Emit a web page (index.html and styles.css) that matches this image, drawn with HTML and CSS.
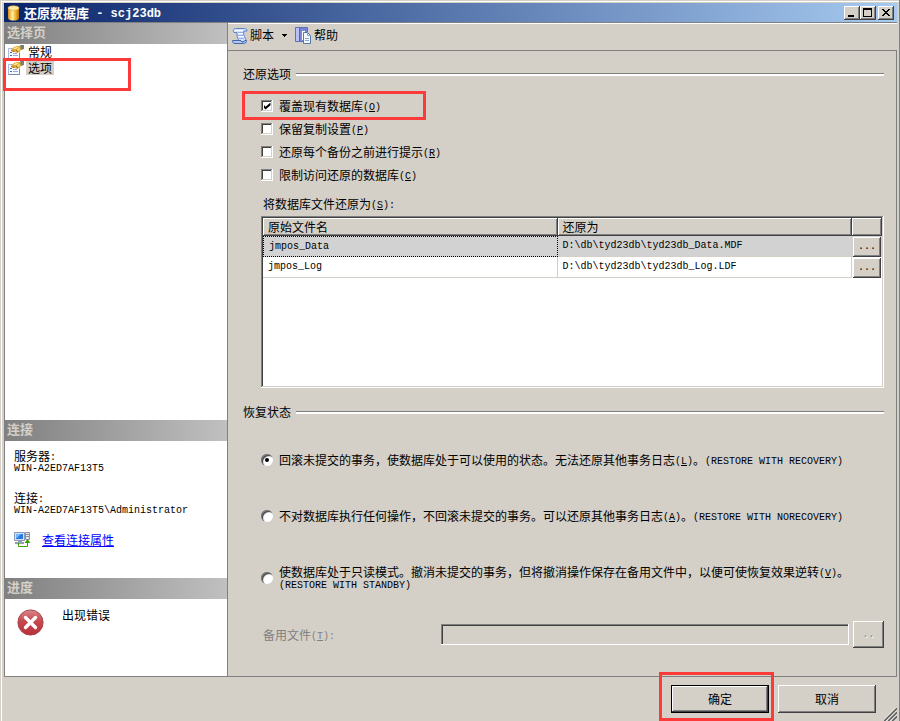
FILE: index.html
```html
<!DOCTYPE html>
<html lang="zh-CN">
<head>
    <meta charset="UTF-8">
    <meta name="viewport" content="width=device-width, initial-scale=1.0">
    <title>还原数据库 - scj23db</title>
    <link rel="stylesheet" href="styles.css">
</head>
<body>
    <div class="dialog">
        <header class="titlebar">
            <svg class="title-icon" width="16" height="16" viewBox="0 0 16 16">
                <defs>
                    <linearGradient id="gold">
                        <stop offset="0" stop-color="#d98c10"/>
                        <stop offset="0.4" stop-color="#fff0a0"/>
                        <stop offset="0.65" stop-color="#f5bc38"/>
                        <stop offset="1" stop-color="#b87008"/>
                    </linearGradient>
                </defs>
                <path d="M2 3v10c0 3.400 11 3.400 11 0V3z" fill="url(#gold)"/>
                <ellipse cx="7.500" cy="3" rx="5.500" ry="2.300" fill="#ffeaa0" stroke="#dfa030" stroke-width="0.600"/>
            </svg>
            <h1 class="title">还原数据库<span class="title-latin"> - scj23db</span></h1>
            <div class="window-buttons">
                <button type="button" class="raised window-button" aria-label="最小化">
                    <svg width="16" height="14" shape-rendering="crispEdges"><path d="M4 9h6v2H4z"/></svg>
                </button>
                <button type="button" class="raised window-button" aria-label="最大化">
                    <svg width="16" height="14" shape-rendering="crispEdges"><path d="M3 2h9v9H3zM4 4v6h7V4z" fill-rule="evenodd"/></svg>
                </button>
                <button type="button" class="raised window-button close" aria-label="关闭">
                    <svg width="16" height="14" shape-rendering="crispEdges"><path d="M4 3h2v1h1v1h2V4h1V3h2v1h-1v1h-1v1H9v1h1v1h1v1h1v1h-2V9H9V8H7v1H6v1H4V9h1V8h1V7h1V6H6V5H5V4H4z"/></svg>
                </button>
            </div>
        </header>

        <div class="workspace">
            <aside class="sidebar">
                <h2 class="side-heading">选择页</h2>
                <nav class="pages">
                    <svg class="defs" width="0" height="0">
                        <symbol id="page-icon" viewBox="0 0 16 15">
                            <path d="M0.500 3.500h11v10h-11z" fill="#f8faff" stroke="#a8b8dc"/>
                            <path d="M0.500 13.500h11V8" fill="none" stroke="#7888b8"/>
                            <path d="M2 7h2v1H2zM2 10h2v1H2z" fill="#4868c0"/>
                            <path d="M5 8.500h4M5 10.500h5" stroke="#98a8dc"/>
                            <path d="M3 5l3-3 3-1 4 0 1 3-3 3-2 1-2-1-2 0z" fill="#e0a838"/>
                            <path d="M5 4l3-2h3L8 4zM9 5l2-2 1 1-2 2z" fill="#ffe888"/>
                            <path d="M12 0h4v4l-3 1z" fill="#788070"/>
                            <path d="M3 5.500l3 1M8 5l2 2" stroke="#805818" stroke-width="0.800"/>
                        </symbol>
                    </svg>
                    <button type="button" class="page">
                        <svg width="16" height="15"><use href="#page-icon"/></svg>
                        <span class="page-name">常规</span>
                    </button>
                    <button type="button" class="page current" aria-current="page">
                        <svg width="16" height="15"><use href="#page-icon"/></svg>
                        <span class="page-name">选项</span>
                        <span class="mark mark-page"></span>
                    </button>
                </nav>

                <h2 class="side-heading">连接</h2>
                <div class="connection">
                    <dl class="details">
                        <dt>服务器<span class="latin">:</span></dt>
                        <dd class="value">WIN-A2ED7AF13T5</dd>
                        <dt>连接<span class="latin">:</span></dt>
                        <dd class="value">WIN-A2ED7AF13T5\Administrator</dd>
                    </dl>
                    <div class="connection-link">
                        <svg width="17" height="16" viewBox="0 0 17 16">
                            <path d="M0.500 0.500h10v8h-10z" fill="#d8e0f0" stroke="#8898b8"/>
                            <path d="M2 2h7v5H2z" fill="#2878e0"/>
                            <path d="M2 2h5L3 6H2z" fill="#70b8ff"/>
                            <path d="M4 9h4v1h2v2H1v-2h3z" fill="#98a0b0"/>
                            <path d="M11.500 0.500h4v7h-4z" fill="#e4e6ec" stroke="#8c92a0"/>
                            <path d="M12 2.500h3M12 4.500h3" stroke="#8c92a0"/>
                            <path d="M4.500 11v3.500h9V10" fill="none" stroke="#38a000"/>
                            <path d="M10.500 11l3-4 3 4z" fill="#38a000"/>
                        </svg>
                        <a href="#">查看连接属性</a>
                    </div>
                </div>

                <h2 class="side-heading">进度</h2>
                <div class="progress">
                    <svg width="27" height="27" viewBox="0 0 27 27">
                        <defs>
                            <linearGradient id="red" x2="0" y2="1">
                                <stop offset="0" stop-color="#d88888"/>
                                <stop offset="0.450" stop-color="#c84850"/>
                                <stop offset="1" stop-color="#b83038"/>
                            </linearGradient>
                        </defs>
                        <circle cx="13.500" cy="13.500" r="12.600" fill="url(#red)" stroke="#a84850" stroke-width="1"/>
                        <path d="M8.500 8.500l10 10M18.500 8.500l-10 10" stroke="#fff" stroke-width="3.400" stroke-linecap="round"/>
                    </svg>
                    <span>出现错误</span>
                </div>
            </aside>

            <main class="main">
                <div class="toolbar">
                    <button type="button" class="tool">
                        <svg width="16" height="17" viewBox="0 0 16 17">
                            <path d="M3.500 1.500h9c2 0 2.500 1 2.500 2.500h-3c-1 3 0 5 1.500 7.500 1 2 0 3-1 3H6c1-2-1-4-1-6.500V5.500H2C0.500 4 1.500 1.500 3.500 1.500z" fill="#d4e2ff" stroke="#5c80c8"/>
                            <path d="M0.500 13.500h8.500c0 2 3.500 2 3.500 0h2c0 2-1 3-3 3H3c-1.500 0-2.500-1-2.500-3z" fill="#b0c8f8" stroke="#4868a8"/>
                            <path d="M3 3.500h8M6 6.500h5M6 9.500h6" stroke="#f8fbff"/>
                            <path d="M6 5.500h5M6 8.500h5M7 11.500h5" stroke="#90acec"/>
                        </svg>
                        脚本
                        <svg class="arrow" width="5" height="3" shape-rendering="crispEdges"><path d="M0 0h5v1H4v1H3v1H2V2H1V1H0z"/></svg>
                    </button>
                    <button type="button" class="tool">
                        <svg width="17" height="17" viewBox="0 0 17 17">
                            <path d="M0.500 0.500h12v13l-1 1h-11z" fill="#7484d4" stroke="#6070b8"/>
                            <path d="M1 1h3v13H1z" fill="#b8c0f4"/>
                            <path d="M4.500 1v13" stroke="#5464b0"/>
                            <path d="M6.500 3.500h3l3 3v7h-6z" fill="#fff" stroke="#7890c0"/>
                            <path d="M8.500 5.500h4l3 3v8h-7z" fill="#f4f8ff" stroke="#5878a8"/>
                            <path d="M12.500 5.500v3h3M10 11.500h4M10 13.500h4" fill="none" stroke="#88a4d0"/>
                        </svg>
                        帮助
                    </button>
                </div>

                <form class="content">
                    <h2 class="section-title">还原选项</h2>
                    <div class="checks">
                        <label class="choice">
                            <input type="checkbox" class="checkbox" checked>
                            <span>覆盖现有数据库<span class="latin">(<u>O</u>)</span></span>
                            <span class="mark mark-check"></span>
                        </label>
                        <label class="choice">
                            <input type="checkbox" class="checkbox">
                            <span>保留复制设置<span class="latin">(<u>P</u>)</span></span>
                        </label>
                        <label class="choice">
                            <input type="checkbox" class="checkbox">
                            <span>还原每个备份之前进行提示<span class="latin">(<u>R</u>)</span></span>
                        </label>
                        <label class="choice">
                            <input type="checkbox" class="checkbox">
                            <span>限制访问还原的数据库<span class="latin">(<u>C</u>)</span></span>
                        </label>
                    </div>

                    <p class="files-label" id="files-label">将数据库文件还原为<span class="latin">(<u>S</u>):</span></p>
                    <div class="files">
                        <table class="files-table" aria-labelledby="files-label">
                            <thead>
                                <tr>
                                    <th class="raised">原始文件名</th>
                                    <th class="raised">还原为</th>
                                    <th class="raised browse-col"></th>
                                </tr>
                            </thead>
                            <tbody>
                                <tr class="selected">
                                    <td class="focused">jmpos_Data</td>
                                    <td>D:\db\tyd23db\tyd23db_Data.MDF</td>
                                    <td class="browse-col"><button type="button" class="raised browse">...</button></td>
                                </tr>
                                <tr>
                                    <td>jmpos_Log</td>
                                    <td>D:\db\tyd23db\tyd23db_Log.LDF</td>
                                    <td class="browse-col"><button type="button" class="raised browse">...</button></td>
                                </tr>
                            </tbody>
                        </table>
                    </div>

                    <h2 class="section-title">恢复状态</h2>
                    <div class="radios">
                        <label class="choice">
                            <input type="radio" class="radio" name="state" checked>
                            <span>回滚未提交的事务，使数据库处于可以使用的状态。无法还原其他事务日志<span class="latin">(<u>L</u>)</span>。<span class="latin">(RESTORE WITH RECOVERY)</span></span>
                        </label>
                        <label class="choice">
                            <input type="radio" class="radio" name="state">
                            <span>不对数据库执行任何操作，不回滚未提交的事务。可以还原其他事务日志<span class="latin">(<u>A</u>)</span>。<span class="latin">(RESTORE WITH NORECOVERY)</span></span>
                        </label>
                        <label class="choice">
                            <input type="radio" class="radio" name="state">
                            <span>使数据库处于只读模式。撤消未提交的事务，但将撤消操作保存在备用文件中，以便可使恢复效果逆转<span class="latin">(<u>V</u>)</span>。<br><span class="latin">(RESTORE WITH STANDBY)</span></span>
                        </label>
                    </div>

                    <div class="standby">
                        <label class="standby-label" for="standby-file">备用文件<span class="latin">(<u>T</u>):</span></label>
                        <input type="text" class="standby-input" id="standby-file" disabled>
                        <button type="button" class="raised standby-browse" disabled>..</button>
                    </div>
                </form>
            </main>
        </div>

        <footer class="footer">
            <div class="confirm">
                <button type="button" class="raised action default">确定</button>
                <span class="mark mark-confirm"></span>
            </div>
            <button type="button" class="raised action">取消</button>
            <svg class="grip" width="13" height="13" viewBox="0 0 13 13">
                <path d="M0 13L13 0M4 13l9-9M8 13l5-5" stroke="#606060" stroke-width="2"/>
                <path d="M-1.500 13L13-1.500M2.500 13L13 2.500M6.500 13L13 6.500" stroke="#fff" stroke-width="1"/>
            </svg>
        </footer>
    </div>
</body>
</html>
```
FILE: styles.css
```css
* {
    box-sizing: border-box;
}

body {
    margin: 0;
    background-color: #d4d0c8;
    color: #000;
    font-family: "Noto Sans CJK SC", sans-serif;
    font-size: 12px;
    line-height: 12px;
}

h1, h2, p, dl, dd {
    margin: 0;
    font-weight: normal;
}

button, input {
    margin: 0;
    padding: 0;
    border: none;
    border-radius: 0;
    background-color: transparent;
    color: inherit;
    font: inherit;
}

svg {
    display: block;
    flex: none;
}

/* no line height of its own, so mixed lines stay 12px high */
.latin {
    font-family: "Liberation Mono", monospace;
    font-size: 10px;
    line-height: 0;
    vertical-align: 1px;
}

.raised {
    background-color: #d4d0c8;
    box-shadow: inset -1px -1px #404040, inset 1px 1px #fff, inset -2px -2px #808080;
}

/* red highlight frames */
.mark {
    position: absolute;
    border: 3px solid #fc3a3a;
    pointer-events: none;
}

.dialog {
    display: flex;
    flex-direction: column;
    min-height: 100vh;
    padding: 3px 3px 0 4px;
    box-shadow: inset -1px 0 #808080, inset 1px 1px #d4d0c8, inset 2px 2px #fff;
}

/* title bar */
.titlebar {
    display: flex;
    align-items: center;
    height: 19px;
    padding: 0 3px 0 2px;
    background: linear-gradient(to right, #0a246a, #a6caf0);
    color: #fff;
}

.title {
    flex: 1;
    margin-left: 2px;
    font-size: 13px;
    font-weight: bold;
    white-space: pre;
}

.title-latin {
    font-family: "Liberation Mono", monospace;
    font-size: 12px;
    line-height: 0;
    vertical-align: 1px;
}

.window-buttons {
    display: flex;
}

.window-button {
    width: 16px;
    height: 14px;
}

.close {
    margin-left: 2px;
}

.workspace {
    display: flex;
    flex: 1;
    border: solid #808080;
    border-width: 1px 0 1px 1px;
}

/* left column */
.sidebar {
    display: flex;
    flex: none;
    flex-direction: column;
    width: 223px;
    border-right: 1px solid #808080;
    background-color: #fff;
}

.side-heading {
    height: 21px;
    padding-left: 2px;
    background: linear-gradient(to right, #808080, #c0c0c0);
    color: #d4d0c8;
    font-size: 13px;
    font-weight: bold;
    line-height: 18px;
}

.pages {
    flex: 1;
}

.defs {
    position: absolute;
}

.page {
    display: flex;
    position: relative;
    align-items: center;
    width: 126px;
    height: 16px;
    padding-left: 3px;
}

.page-name {
    margin-left: 2px;
    padding: 1px 2px;
}

.current .page-name {
    background-color: #d4d0c8;
}

.mark-page {
    inset: -2px 0 -15px -2px;
}

.connection {
    padding: 9px 10px 30px 9px;
}

.value {
    font-family: "Liberation Mono", monospace;
    font-size: 10px;
    line-height: 14px;
}

.value + dt {
    margin-top: 16px;
}

.connection-link {
    display: flex;
    align-items: center;
    gap: 11px;
    margin-top: 14px;
}

.connection-link a {
    color: #00f;
}

.progress {
    display: flex;
    gap: 18px;
    min-height: 77px;
    padding: 10px 12px;
}

/* right column */
.main {
    display: flex;
    flex: 1;
    flex-direction: column;
    border-top: 1px solid #fff;
}

.toolbar {
    display: flex;
    height: 27px;
    gap: 8px;
    padding: 0 4px 4px;
    border-bottom: 1px solid #808080;
}

.tool {
    display: flex;
    align-items: center;
    gap: 2px;
}

.arrow {
    margin-left: 6px;
}

.content {
    display: flex;
    flex: 1;
    flex-direction: column;
    padding: 17px 12px 28px 15px;
    border-right: 1px solid #808080;
}

.section-title {
    display: flex;
    align-items: center;
    gap: 5px;
    font-size: 12px;
}

.section-title::after {
    content: "";
    flex: 1;
    height: 2px;
    border-top: 1px solid #808080;
    background-color: #fff;
}

.checks, .radios {
    display: flex;
    flex-direction: column;
    align-items: flex-start;
    padding-left: 18px;
}

.checks {
    gap: 11px;
    margin-top: 20px;
}

.radios {
    gap: 44px;
    margin-top: 36px;
}

.choice {
    display: flex;
    position: relative;
    align-items: center;
    min-height: 12px;
    gap: 6px;
}

.checkbox, .radio {
    display: grid;
    flex: none;
    place-items: center;
    width: 12px;
    height: 12px;
    appearance: none;
    background-color: #fff;
    box-shadow: inset -1px -1px #fff, inset 1px 1px #808080, inset -2px -2px #d4d0c8, inset 2px 2px #404040;
}

.checkbox:checked::before {
    content: "";
    width: 7px;
    height: 7px;
    background-color: #000;
    clip-path: polygon(0 30%, 30% 60%, 100% 0, 100% 40%, 30% 100%, 0 70%);
}

.radio {
    border-radius: 50%;
    box-shadow: inset 1px 1px #808080, inset 2px 2px 1px #404040;
}

.radio:checked::before {
    content: "";
    width: 4px;
    height: 4px;
    border-radius: 50%;
    background-color: #000;
}

.mark-check {
    inset: -9px -45px -8px -19px;
}

.files-label {
    margin-top: 17px;
    padding-left: 20px;
}

.files {
    flex: 1;
    min-height: 172px;
    margin: 6px 0 18px 18px;
    padding: 2px;
    background-color: #fff;
    box-shadow: inset -1px -1px #fff, inset 1px 1px #808080, inset -2px -2px #d4d0c8, inset 2px 2px #404040;
}

.files-table {
    width: 100%;
    border-collapse: separate;
    border-spacing: 0;
    table-layout: fixed;
}

.files-table th {
    height: 18px;
    padding: 0 5px;
    font-weight: normal;
    text-align: left;
}

.files-table td {
    height: 21px;
    padding: 0 5px;
    border: solid #d4d0c8;
    border-width: 0 1px 1px 0;
    font-family: "Liberation Mono", monospace;
    font-size: 10px;
}

.files-table .browse-col {
    width: 30px;
    padding: 0 0 0 1px;
    border: none;
}

.selected {
    background-color: #d2d2d2;
}

.files-table .focused {
    border: 1px dotted #000;
}

.browse {
    display: block;
    width: 28px;
    height: 20px;
}

.standby {
    display: flex;
    align-items: center;
    margin-top: 31px;
    padding-left: 20px;
}

.standby-label {
    width: 178px;
    color: #808080;
}

.standby-input {
    flex: 1;
    height: 21px;
    padding: 2px 4px;
    box-shadow: inset -1px -1px #fff, inset 1px 1px #808080, inset 2px 2px #404040;
}

.standby-browse {
    width: 31px;
    height: 27px;
    margin-left: 4px;
    color: #808080;
    font-family: "Liberation Mono", monospace;
    font-size: 10px;
    text-shadow: 1px 1px #fff;
}

/* bottom buttons */
.footer {
    display: flex;
    position: relative;
    justify-content: flex-end;
    gap: 9px;
    padding: 8px 21px;
    height: 44px;
}

.confirm {
    position: relative;
}

.action {
    width: 98px;
    height: 28px;
}

.default {
    border: 1px solid #000;
}

.mark-confirm {
    inset: -13px -5px -8px -12px;
}

.grip {
    position: absolute;
    right: 0;
    bottom: 0;
}
```
